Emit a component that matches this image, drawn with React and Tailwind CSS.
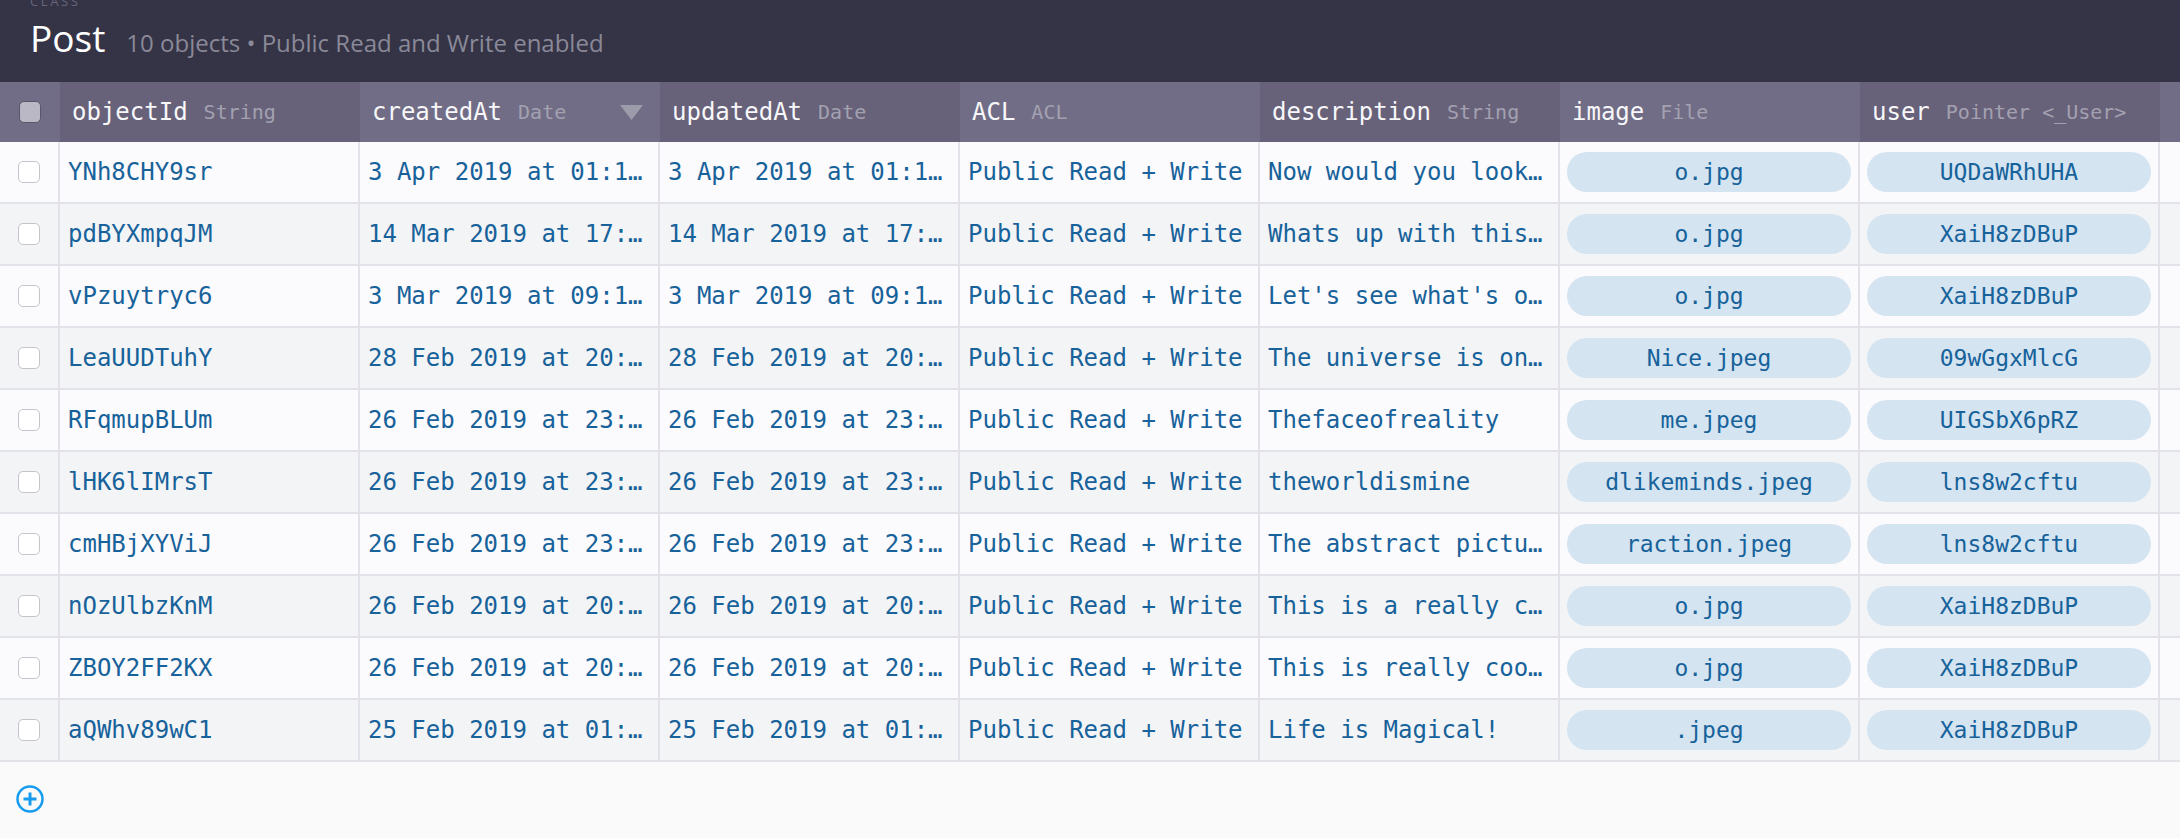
import React from 'react';

const columns = [
  { name: 'objectId', type: 'String' },
  { name: 'createdAt', type: 'Date', sorted: true },
  { name: 'updatedAt', type: 'Date' },
  { name: 'ACL', type: 'ACL' },
  { name: 'description', type: 'String' },
  { name: 'image', type: 'File' },
  { name: 'user', type: 'Pointer <_User>' },
];

const rows = [
  ['YNh8CHY9sr', '3 Apr 2019 at 01:14:52', 'Now would you look at this', 'o.jpg', 'UQDaWRhUHA'],
  ['pdBYXmpqJM', '14 Mar 2019 at 17:22:09', 'Whats up with this one', 'o.jpg', 'XaiH8zDBuP'],
  ['vPzuytryc6', '3 Mar 2019 at 09:13:41', "Let's see what's out there", 'o.jpg', 'XaiH8zDBuP'],
  ['LeaUUDTuhY', '28 Feb 2019 at 20:41:17', 'The universe is one big picture', 'Nice.jpeg', '09wGgxMlcG'],
  ['RFqmupBLUm', '26 Feb 2019 at 23:52:30', 'Thefaceofreality', 'me.jpeg', 'UIGSbX6pRZ'],
  ['lHK6lIMrsT', '26 Feb 2019 at 23:31:05', 'theworldismine', 'dlikeminds.jpeg', 'lns8w2cftu'],
  ['cmHBjXYViJ', '26 Feb 2019 at 23:12:48', 'The abstract picture of life', 'raction.jpeg', 'lns8w2cftu'],
  ['nOzUlbzKnM', '26 Feb 2019 at 20:58:33', 'This is a really cool photo', 'o.jpg', 'XaiH8zDBuP'],
  ['ZBOY2FF2KX', '26 Feb 2019 at 20:44:19', 'This is really cool stuff', 'o.jpg', 'XaiH8zDBuP'],
  ['aQWhv89wC1', '25 Feb 2019 at 01:07:56', 'Life is Magical!', '.jpeg', 'XaiH8zDBuP'],
];

const mono = "font-['DejaVu_Sans_Mono','Liberation_Mono',monospace]";

function Cell({ children }) {
  return (
    <div className={`w-[300px] shrink-0 h-full border-r-2 border-[#e2e2e8] pl-2 pr-3 flex items-center ${mono} text-[24px] text-[#17629a]`}>
      <span className="truncate">{children}</span>
    </div>
  );
}

function Pill({ children }) {
  return (
    <div className="w-[300px] shrink-0 h-full border-r-2 border-[#e2e2e8] px-[7px] flex items-center">
      <div className={`w-full h-[40px] rounded-full bg-[#d4e4f1] flex items-center justify-center ${mono} text-[23px] text-[#17629a]`}>
        <span className="truncate">{children}</span>
      </div>
    </div>
  );
}

function App() {
  return (
    <div className="w-[2180px] h-[838px] overflow-hidden bg-[#fbfafb]">
      <div className="h-[82px] bg-[#353446] pl-[30px] flex flex-col overflow-hidden font-['Open_Sans',sans-serif]">
        <div className="-mt-[5px] h-[13px] leading-[13px] text-[13px] tracking-[0.2em] text-[#66657a]">CLASS</div>
        <div className="mt-[11px] flex items-baseline">
          <span className="text-[37px] leading-[37px] text-white">Post</span>
          <span className="ml-[21px] text-[24px] leading-[37px] text-[#8a8998]">10 objects • Public Read and Write enabled</span>
        </div>
      </div>

      <div className="flex h-[60px]">
        <div className="w-[60px] shrink-0 bg-[#716d86] flex items-center justify-center">
          <div className="w-[22px] h-[22px] rounded-[5px] bg-[#bab8c4] border border-[#5a566b]" />
        </div>
        {columns.map((c, i) => (
          <div
            key={c.name}
            className={`w-[300px] shrink-0 flex items-center pl-3 pr-[17px] ${i % 2 === 0 ? 'bg-[#67627a]' : 'bg-[#716d86]'} ${mono}`}
          >
            <span className="text-[24px] text-[#f7f7f9]">{c.name}</span>
            <span className="ml-4 text-[20px] text-[#a3a1b0]">{c.type}</span>
            {c.sorted && (
              <svg className="ml-auto" width="23" height="15" viewBox="0 0 23 15">
                <polygon points="0,0 23,0 11.5,15" fill="#9c9ba9" />
              </svg>
            )}
          </div>
        ))}
        <div className="w-[300px] shrink-0 bg-[#716d86]" />
      </div>

      {rows.map((r, i) => (
        <div
          key={r[0]}
          className={`flex h-[62px] border-b-2 border-[#e2e2e8] ${i % 2 === 0 ? 'bg-[#fbfafc]' : 'bg-[#f3f4f6]'}`}
        >
          <div className="w-[60px] shrink-0 h-full border-r-2 border-[#e2e2e8] flex items-center justify-center">
            <div className="w-[22px] h-[22px] rounded-[5px] bg-white border border-[#c4c4ca]" />
          </div>
          <Cell>{r[0]}</Cell>
          <Cell>{r[1]}</Cell>
          <Cell>{r[1]}</Cell>
          <Cell>Public Read + Write</Cell>
          <Cell>{r[2]}</Cell>
          <Pill>{r[3]}</Pill>
          <Pill>{r[4]}</Pill>
          <div className="w-[300px] shrink-0 h-full" />
        </div>
      ))}

      <div className="mt-[23px] ml-[16px]">
        <svg width="28" height="28" viewBox="0 0 28 28">
          <circle cx="14" cy="14" r="12.5" fill="none" stroke="#169cee" strokeWidth="2.5" />
          <path d="M14 7.5v13M7.5 14h13" stroke="#169cee" strokeWidth="3" />
        </svg>
      </div>
    </div>
  );
}

export default App;
